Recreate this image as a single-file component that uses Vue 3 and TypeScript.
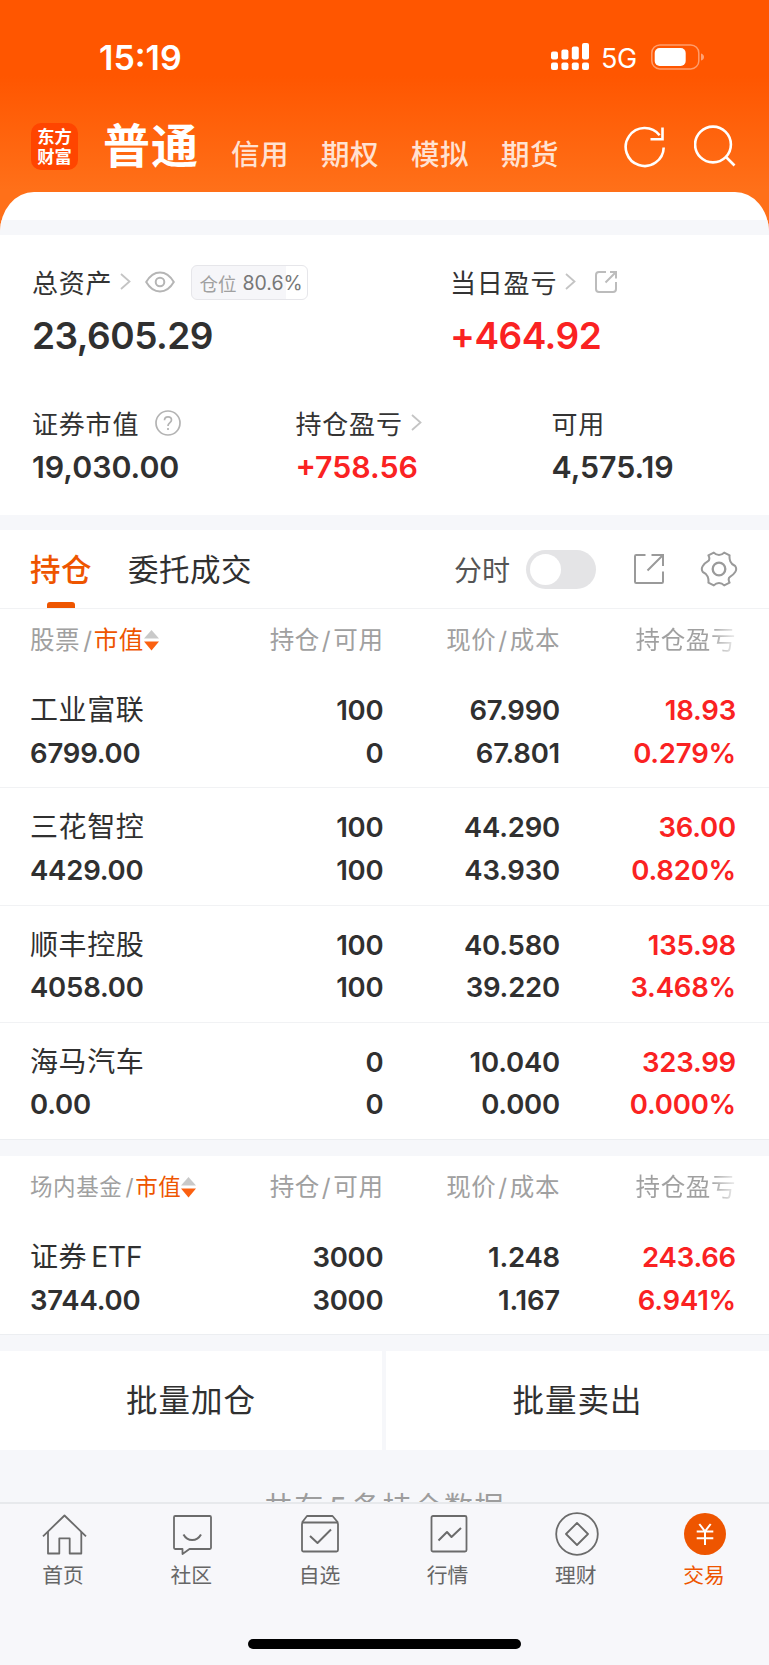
<script setup lang="ts">
interface Holding {
  name: string
  suffix?: string
  value: string
  held: string
  usable: string
  price: string
  cost: string
  profit: string
  rate: string
}
interface Group {
  title: string
  small: boolean
  rows: Holding[]
}

const accounts: string[] = ['信用', '期权', '模拟', '期货']

const groups: Group[] = [
  {
    title: '股票',
    small: false,
    rows: [
      { name: '工业富联', value: '6799.00', held: '100', usable: '0', price: '67.990', cost: '67.801', profit: '18.93', rate: '0.279%' },
      { name: '三花智控', value: '4429.00', held: '100', usable: '100', price: '44.290', cost: '43.930', profit: '36.00', rate: '0.820%' },
      { name: '顺丰控股', value: '4058.00', held: '100', usable: '100', price: '40.580', cost: '39.220', profit: '135.98', rate: '3.468%' },
      { name: '海马汽车', value: '0.00', held: '0', usable: '0', price: '10.040', cost: '0.000', profit: '323.99', rate: '0.000%' },
    ],
  },
  {
    title: '场内基金',
    small: true,
    rows: [
      { name: '证券', suffix: 'ETF', value: '3744.00', held: '3000', usable: '3000', price: '1.248', cost: '1.167', profit: '243.66', rate: '6.941%' },
    ],
  },
]

const tabs: string[] = ['首页', '社区', '自选', '行情', '理财', '交易']
</script>

<template>
  <div class="screen">
    <header class="hero">
      <div class="status">
        <span class="clock">15:19</span>
        <svg class="signal" width="38" height="28" viewBox="0 0 38 28" fill="#fff">
          <rect x="0" y="8.5" width="7" height="8" rx="2" />
          <rect x="10.4" y="6.5" width="7" height="10" rx="2" />
          <rect x="20.8" y="3.5" width="7" height="13" rx="2" />
          <rect x="31" y="0" width="7" height="16.5" rx="2" />
          <rect x="0" y="19.5" width="7" height="7.5" rx="2" />
          <rect x="10.4" y="19.5" width="7" height="7.5" rx="2" />
          <rect x="20.8" y="19.5" width="7" height="7.5" rx="2" />
          <rect x="31" y="19.5" width="7" height="7.5" rx="2" />
        </svg>
        <span class="net">5G</span>
        <svg class="battery" width="54" height="26" viewBox="0 0 54 26">
          <rect x="0.8" y="0.9" width="47" height="24" rx="8" fill="none" stroke="#fff" stroke-opacity=".42" stroke-width="1.5" />
          <rect x="3.7" y="4" width="31" height="18" rx="5" fill="#fff" />
          <path d="M50 9.5q3 1 3 3.5t-3 3.5z" fill="#fff" fill-opacity=".45" />
        </svg>
      </div>
      <nav class="accounts">
        <div class="logo"><span>东方</span><span>财富</span></div>
        <span class="current">普通</span>
        <span v-for="a in accounts" :key="a" class="account">{{ a }}</span>
        <svg class="refresh" width="42" height="42" viewBox="0 0 42 42" fill="none" stroke="#fff" stroke-width="2.6">
          <path d="M39.7 21.5A19 19 0 1 1 35.6 9.2" />
          <path d="M38.5 1.5V13.3H26.5" />
        </svg>
        <svg class="search" width="42" height="42" viewBox="0 0 42 42" fill="none" stroke="#fff" stroke-width="2.6">
          <circle cx="19" cy="19.5" r="17.9" />
          <path d="M31.5 31.5l9 9" />
        </svg>
      </nav>
      <div class="sheet"><div class="sheet-band"></div></div>
    </header>

    <section class="summary">
      <div class="line top">
        <div class="cell wide">
          <div class="label">
            <span>总资产</span>
            <svg class="chev" width="11" height="17" viewBox="0 0 11 17"><path d="M1 1l8.5 7.5L1 16" /></svg>
            <svg class="eye" width="30" height="22" viewBox="0 0 30 22" fill="none" stroke="#b5b5b5" stroke-width="2">
              <path d="M1.2 11C5 4.5 9.5 1.5 15 1.5S25 4.5 28.8 11C25 17.5 20.5 20.5 15 20.5S5 17.5 1.2 11z" />
              <circle cx="15" cy="11" r="4.3" />
            </svg>
            <span class="badge"><span class="badge-name">仓位</span><span class="badge-num">80.6%</span></span>
          </div>
          <div class="big">23,605.29</div>
        </div>
        <div class="cell">
          <div class="label">
            <span>当日盈亏</span>
            <svg class="chev" width="11" height="17" viewBox="0 0 11 17"><path d="M1 1l8.5 7.5L1 16" /></svg>
            <svg class="share-sm" width="24" height="24" viewBox="0 0 24 24" fill="none" stroke="#bcbcbc" stroke-width="2">
              <path d="M12 2H5Q2 2 2 5V19Q2 22 5 22H19Q22 22 22 19V12" />
              <path d="M16 2H22V8.5M21.5 2.5L11.5 12.5" />
            </svg>
          </div>
          <div class="big red">+464.92</div>
        </div>
      </div>
      <div class="line bottom">
        <div class="cell c1">
          <div class="label">
            <span>证券市值</span>
            <svg class="help" width="26" height="26" viewBox="0 0 26 26" fill="none" stroke="#b3b3b3" stroke-width="1.7">
              <circle cx="13" cy="13" r="12" />
              <path d="M9.5 10.3Q9.5 6.8 13 6.8T16.5 10Q16.5 11.5 14.7 12.9T13 16" />
              <path d="M13 18V20" />
            </svg>
          </div>
          <div class="mid">19,030.00</div>
        </div>
        <div class="cell c2">
          <div class="label">
            <span>持仓盈亏</span>
            <svg class="chev" width="11" height="17" viewBox="0 0 11 17"><path d="M1 1l8.5 7.5L1 16" /></svg>
          </div>
          <div class="mid red">+758.56</div>
        </div>
        <div class="cell">
          <div class="label"><span>可用</span></div>
          <div class="mid">4,575.19</div>
        </div>
      </div>
    </section>

    <section class="toolbar">
      <span class="tab on">持仓</span>
      <span class="tab">委托成交</span>
      <span class="minute">分时</span>
      <span class="toggle"><i></i></span>
      <svg class="share" width="32" height="32" viewBox="0 0 32 32" fill="none" stroke="#9a9a9a" stroke-width="2">
        <path d="M12.5 2H3.2Q2 2 2 3.2V28.8Q2 30 3.2 30H28.8Q30 30 30 28.8V18.5" />
        <path d="M18.5 2H30V13M29.5 2.5L14.5 17.5" />
      </svg>
      <svg class="gear" width="38" height="38" viewBox="0 0 38 38" fill="none" stroke="#9a9a9a" stroke-width="2" stroke-linejoin="round">
        <path d="M13.8 2.6Q16 5 19 5T24.200 2.600L29.600 5.300Q29.200 8.500 30.300 11.400T35.200 16Q37.200 19 35.200 22T30.300 26.600T29.600 32.700L24.200 35.400Q22 33 19 33T13.800 35.400L8.400 32.700Q8.800 29.500 7.700 26.600T2.800 22Q.8 19 2.800 16T7.700 11.400T8.400 5.300Z" />
        <circle cx="19" cy="19" r="6.3" stroke-width="2.3" />
      </svg>
    </section>

    <section v-for="g in groups" :key="g.title" class="group" :class="{ fund: g.small }">
      <div class="grid head">
        <span class="first">{{ g.title }}<b>/</b><em>市值</em>
          <svg width="15" height="21" viewBox="0 0 15 21"><path d="M7.5 0L15 8.5H0z" fill="#c9c9c9" /><path d="M7.5 20.5L15 11.5H0z" fill="#fb6010" /></svg>
        </span>
        <span>持仓<b>/</b>可用</span>
        <span>现价<b>/</b>成本</span>
        <span class="fade">持仓盈亏</span>
      </div>
      <div v-for="r in g.rows" :key="r.name" class="grid row">
        <div><p class="name">{{ r.name }}<span v-if="r.suffix" class="suffix">{{ r.suffix }}</span></p><p>{{ r.value }}</p></div>
        <div><p>{{ r.held }}</p><p>{{ r.usable }}</p></div>
        <div><p>{{ r.price }}</p><p>{{ r.cost }}</p></div>
        <div class="red"><p>{{ r.profit }}</p><p>{{ r.rate }}</p></div>
      </div>
    </section>

    <section class="actions">
      <button>批量加仓</button>
      <button>批量卖出</button>
    </section>

    <div class="count">共有<b>5</b>条持仓数据</div>

    <footer class="tabbar">
      <div class="items">
        <div v-for="(t, i) in tabs" :key="t" class="item" :class="{ active: i === 5 }">
          <svg width="46" height="46" viewBox="0 0 46 46" fill="none" stroke="#6b6b6b" stroke-width="1.8" stroke-linejoin="round">
            <template v-if="i === 0">
              <path d="M2 25.3L23.5 4.5L45 25.3" />
              <path d="M7 21V42.5H18.3V27.3H28.7V42.5H40.3V21" />
            </template>
            <template v-else-if="i === 1">
              <path d="M6.2 5H40.8Q42 5 42 6.2V36.8Q42 38 40.8 38H20.5L13.5 43V38H6.2Q5 38 5 36.8V6.2Q5 5 6.2 5Z" />
              <path d="M14.5 23.5Q17.5 29 23.2 29T32 23.5" stroke-width="2" />
            </template>
            <template v-else-if="i === 2">
              <path d="M5 11.5L10 5H35.5L41 11.5" />
              <rect x="5" y="11.5" width="36" height="29" rx="1.5" />
              <path d="M13 25L20.5 32L34 18.5" stroke-width="2" />
            </template>
            <template v-else-if="i === 3">
              <rect x="5.5" y="5" width="35" height="35.5" rx="1.5" />
              <path d="M12.5 29.5L21 21L25.5 26L35 17" stroke-width="2" />
            </template>
            <template v-else-if="i === 4">
              <circle cx="23" cy="23" r="20.8" />
              <path d="M23 12L34 23L23 34L12 23Z" />
            </template>
            <template v-else>
              <circle cx="23" cy="23" r="21" fill="#ee5500" stroke="none" />
              <path d="M17.3 13L23 20.3L28.7 13M14.7 20.5H31.3M14.7 27.3H31.3M23 20.3V34" stroke="#fff" stroke-width="2" />
            </template>
          </svg>
          <span>{{ t }}</span>
        </div>
      </div>
      <div class="home-bar"></div>
    </footer>
  </div>
</template>

<style>
body {
  margin: 0;
  background: #f7f7fa;
}
</style>

<style scoped>
.screen {
  width: 769px;
  height: 1665px;
  overflow: hidden;
  display: flex;
  flex-direction: column;
  background: #f6f7fa;
  color: #303030;
  font-family: Inter, "Noto Sans CJK SC", sans-serif;
}
.screen > * {
  flex: none;
}
svg {
  display: block;
  flex: none;
}
p {
  margin: 0;
}
.hero {
  height: 235px;
  background: linear-gradient(#ff5600 0, #ff5600 76px, #ff7019 190px, #ff7019 100%);
  color: #fff;
}
.status {
  height: 114px;
  display: flex;
  align-items: center;
}
.clock {
  width: 451px;
  padding: 1px 0 0 99px;
  margin-right: 1px;
  font-size: 34px;
  font-weight: 600;
  line-height: 40px;
}
.net {
  width: 49px;
  padding: 3px 0 0 12px;
  box-sizing: border-box;
  margin-right: 13px;
  font-size: 27px;
  line-height: 36px;
  letter-spacing: -0.3px;
}
.accounts {
  height: 78px;
  display: flex;
  align-items: flex-start;
}
.logo {
  width: 47px;
  height: 47px;
  margin: 9px 0 0 31px;
  border-radius: 10px;
  background: #ff4500;
  display: flex;
  flex-direction: column;
  align-items: center;
  justify-content: center;
  font-size: 17.3px;
  font-weight: 700;
  line-height: 19.5px;
}
.current {
  width: 128px;
  padding-left: 25px;
  font-size: 47px;
  font-weight: 700;
  line-height: 60px;
  margin-top: 2px;
  letter-spacing: 1px;
}
.account {
  width: 90px;
  margin-top: 20.5px;
  font-size: 28.5px;
  font-weight: 500;
  line-height: 40px;
  letter-spacing: 0.5px;
  color: rgba(255, 255, 255, 0.82);
}
.refresh {
  margin: 12px 0 0 33px;
}
.search {
  margin: 11px 0 0 28px;
}
.sheet {
  height: 43px;
  border-radius: 34px 34px 0 0 / 40px 40px 0 0;
  background: #fff;
  overflow: hidden;
  display: flex;
  align-items: flex-end;
}
.sheet-band {
  width: 100%;
  height: 15px;
  background: #f6f7fa;
}
.summary {
  height: 280px;
  background: #fff;
  padding-left: 32px;
  box-sizing: border-box;
}
.line {
  display: flex;
}
.top {
  padding-top: 26px;
  height: 140px;
  box-sizing: border-box;
}
.bottom {
  padding-top: 27px;
}
.wide {
  width: 418px;
}
.c1 {
  width: 263.5px;
}
.c2 {
  width: 256px;
}
.label {
  height: 41px;
  display: flex;
  align-items: center;
  font-size: 26px;
  letter-spacing: 0.8px;
  color: #333;
}
.chev {
  margin-left: 8px;
  fill: none;
  stroke: #c4c4c4;
  stroke-width: 1.8;
}
.eye {
  margin-left: 14px;
}
.help {
  margin-left: 16px;
}
.badge {
  display: flex;
  align-items: center;
  width: 117px;
  height: 35px;
  box-sizing: border-box;
  margin: 2px 0 0 16px;
  padding-left: 7px;
  border: 1.5px solid #e6e6ea;
  border-radius: 6px;
  background: linear-gradient(90deg, #f6f6f9 94px, #fff 94px);
  letter-spacing: 0;
}
.badge-name {
  font-size: 18.5px;
  color: #a0a0a0;
  width: 43px;
}
.badge-num {
  font-size: 19.5px;
  color: #777;
}
.share-sm {
  margin: 1px 0 0 18px;
}
.big {
  height: 64px;
  line-height: 68px;
  font-size: 37px;
  font-weight: 600;
  letter-spacing: -0.5px;
}
.mid {
  height: 48px;
  line-height: 48px;
  font-size: 30.3px;
  font-weight: 600;
}
.red {
  color: #fa2222;
}
.toolbar {
  height: 79px;
  box-sizing: border-box;
  margin-top: 15px;
  padding-left: 30px;
  border-bottom: 1px solid #f1f2f4;
  background: #fff;
  display: flex;
  align-items: center;
}
.tab {
  height: 78px;
  line-height: 80px;
  font-size: 30.5px;
  letter-spacing: 0.5px;
  margin-right: 36px;
  display: flex;
  flex-direction: column;
  white-space: nowrap;
}
.on {
  color: #ee5500;
  font-weight: 500;
  width: 62px;
}
.on::after {
  content: "";
  width: 28px;
  height: 6px;
  margin: -8px auto 0 17px;
  border-radius: 3px 3px 0 0;
  background: #ee5500;
}
.minute {
  margin-left: 166px;
  width: 72px;
  font-size: 28px;
  color: #555;
}
.toggle {
  width: 70px;
  height: 39px;
  border-radius: 20px;
  background: #e4e4e6;
  display: flex;
  align-items: center;
}
.toggle i {
  width: 31px;
  height: 31px;
  margin-left: 4px;
  border-radius: 50%;
  background: #fff;
}
.share {
  margin-left: 37px;
}
.gear {
  margin-left: 35px;
}
.grid {
  display: grid;
  grid-template-columns: 170px 183.5px 176.5px 176px;
  padding-left: 30px;
  text-align: right;
  background: #fff;
}
.grid > :first-child {
  text-align: left;
}
.head {
  height: 62px;
  line-height: 62px;
  font-size: 24.5px;
  letter-spacing: 0.6px;
  color: #a0a0a0;
}
.head b {
  font-weight: 400;
  padding: 0 2px;
}
.head .first b {
  padding: 0 1px 0 3px;
}
.head em {
  font-style: normal;
  color: #ee5500;
}
.head .first {
  display: flex;
  align-items: center;
  white-space: nowrap;
}
.fade {
  background: linear-gradient(90deg, #a0a0a0 150px, #f4f4f4 178px);
  -webkit-background-clip: text;
  background-clip: text;
  color: transparent;
}
.row {
  height: 117.3px;
  box-sizing: border-box;
  padding-top: 18px;
  border-bottom: 1px solid #f1f2f4;
  font-size: 27.5px;
  font-weight: 600;
  line-height: 42.5px;
  letter-spacing: -0.2px;
}
.row .name {
  font-size: 28px;
  font-weight: 400;
  letter-spacing: 0.6px;
  white-space: nowrap;
}
.suffix {
  margin-left: 4px;
  letter-spacing: 0;
}
.row:last-child {
  border-bottom-color: #eceef1;
}
.fund {
  margin-top: 16px;
}
.fund .first {
  font-size: 22.5px;
}
.actions {
  margin-top: 16px;
  height: 97px;
  display: grid;
  grid-template-columns: 382px 1fr;
  gap: 4px;
}
.actions button {
  border: 0;
  padding: 0;
  background: #fff;
  color: #303030;
  font: 400 31.5px/99px Inter, "Noto Sans CJK SC", sans-serif;
  letter-spacing: 1px;
}
.count {
  height: 53.5px;
  padding-top: 41px;
  box-sizing: border-box;
  overflow: hidden;
  text-align: center;
  font-size: 29px;
  line-height: 38px;
  letter-spacing: 1.6px;
  color: #9d9d9d;
}
.count b {
  font-weight: 400;
  padding: 0 4px;
}
.tabbar {
  height: 164px;
  box-sizing: border-box;
  border-top: 2px solid #e7e9ec;
  background: #f7f7fa;
  display: flex;
  flex-direction: column;
}
.items {
  width: 769px;
  height: 135px;
  display: flex;
}
.item {
  flex: 1;
  display: flex;
  flex-direction: column;
  align-items: center;
  padding-top: 7px;
  color: #666;
  font-size: 20.8px;
  line-height: 37px;
}
.item span {
  margin-left: -2px;
}
.active {
  color: #ee5500;
}
.home-bar {
  width: 273px;
  height: 10px;
  margin-left: 248px;
  border-radius: 5px;
  background: #000;
}
</style>
